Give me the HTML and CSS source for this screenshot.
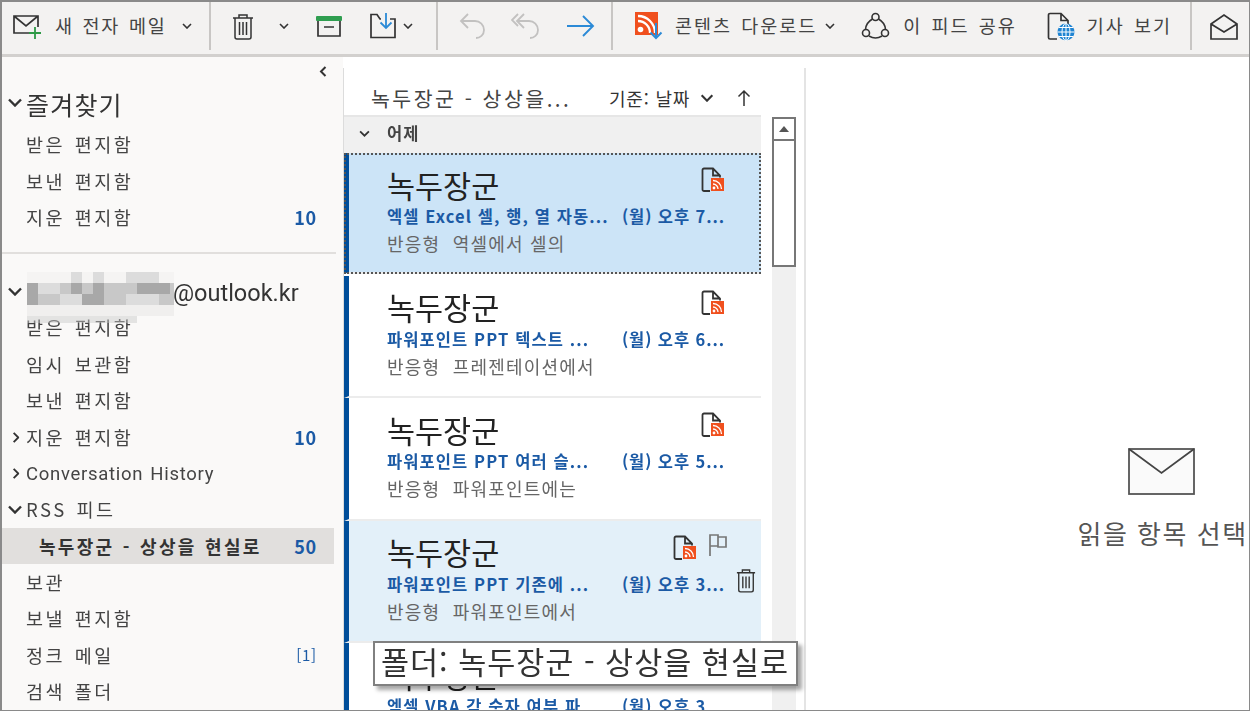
FILE: index.html
```html
<!DOCTYPE html>
<html lang="ko">
<head>
<meta charset="utf-8">
<title>Outlook</title>
<link rel="stylesheet" href="styles.css">
</head>
<body>
<svg class="defs" width="0" height="0" aria-hidden="true">
  <defs>
    <symbol id="chev" viewBox="0 0 10 6"><path d="M1 1l4 4 4-4" fill="none" stroke="currentColor" stroke-width="1.6"/></symbol>
    <symbol id="trash" viewBox="0 0 22 27"><path d="M1 5h20M7 5V2h8v3M3 5v19a2 2 0 0 0 2 2h12a2 2 0 0 0 2-2V5M7.500 9v13M11 9v13M14.500 9v13" fill="none" stroke="#333" stroke-width="1.500"/></symbol>
    <symbol id="rssdoc" viewBox="0 0 24 26"><path d="M9 24H3a1.500 1.500 0 0 1-1.500-1.500V3A1.500 1.500 0 0 1 3 1.500h9l7 7v2M12 1.500v7h7" fill="none" stroke="#333" stroke-width="1.800"/><rect x="10" y="11" width="13" height="13" fill="#f0501e"/><circle cx="13" cy="21" r="1.400" fill="#fff"/><path d="M12 17a5 5 0 0 1 5 5M12 13.500a8.500 8.500 0 0 1 8.500 8.500" fill="none" stroke="#fff" stroke-width="1.300"/></symbol>
  </defs>
</svg>
<div class="app">
  <header class="toolbar">
    <div class="group g1">
      <svg class="ico" width="30" height="28" viewBox="0 0 30 28"><path d="M18 21H2V4h24v11M2 4l12 10L26 4" fill="none" stroke="#333" stroke-width="1.700"/><path d="M23 15v12M17 21h12" stroke="#2d9a46" stroke-width="1.800"/></svg>
      <span class="label l-new">새 전자 메일</span>
      <svg class="chev c-new"><use href="#chev"/></svg>
    </div>
    <div class="group g2">
      <svg class="ico" width="22" height="27"><use href="#trash"/></svg>
      <svg class="chev c-trash"><use href="#chev"/></svg>
      <svg class="ico i-arch" width="28" height="24" viewBox="0 0 28 24"><path d="M3 7v15h22V7M9 13h10" fill="none" stroke="#333" stroke-width="1.700"/><rect x="1" y="2" width="26" height="5" rx="1" fill="#2f9e50"/></svg>
      <svg class="ico i-move" width="29" height="28" viewBox="0 0 29 28"><path d="M12 7H11L8 2.500H2v23h24V7h-5" fill="none" stroke="#333" stroke-width="1.700"/><path d="M17 1v15M11.500 10.500L17 16l5.500-5.500" fill="none" stroke="#2b8ad6" stroke-width="1.800"/></svg>
      <svg class="chev c-move"><use href="#chev"/></svg>
    </div>
    <div class="group g3">
      <svg class="ico" width="28" height="28" viewBox="0 0 28 28"><path d="M9 2L2 9l7 7M2 9h14a9 9 0 0 1 9 9c0 5-4 8-8 8" fill="none" stroke="#c2c1c0" stroke-width="1.800"/></svg>
      <svg class="ico i-all" width="30" height="28" viewBox="0 0 30 28"><path d="M7 2L1 8l6 6M13 2L6 9l7 7M6 9h12a9 9 0 0 1 9 9c0 5-4 8-8 8" fill="none" stroke="#c2c1c0" stroke-width="1.800"/></svg>
      <svg class="ico i-fwd" width="29" height="26" viewBox="0 0 29 26"><path d="M1 13h26M17 3l10 10-10 10" fill="none" stroke="#2b8ad6" stroke-width="1.900"/></svg>
    </div>
    <div class="group g4">
      <svg class="ico" width="29" height="30" viewBox="0 0 29 30"><rect x="0" y="1" width="23" height="23" fill="#f0501e"/><circle cx="5.500" cy="18.500" r="2.800" fill="#fff"/><path d="M3 10a12 12 0 0 1 12 12M3 5a17 17 0 0 1 17 17" fill="none" stroke="#fff" stroke-width="2.300"/><path d="M21 12v15M15.500 21.500L21 27l5.500-5.500" fill="none" stroke="#2b8ad6" stroke-width="2"/></svg>
      <span class="label l-dl">콘텐츠 다운로드</span>
      <svg class="chev c-dl"><use href="#chev"/></svg>
      <svg class="ico i-share" width="29" height="28" viewBox="0 0 29 28"><g fill="none" stroke="#333" stroke-width="1.600"><circle cx="14.500" cy="5" r="3.500"/><circle cx="5" cy="21" r="3.500"/><circle cx="24" cy="21" r="3.500"/><path d="M11.500 7C7 9.500 4.800 13 4.500 17.500M17.500 7C22 9.500 24.200 13 24.500 17.500M8 24c4 2.500 9 2.500 13 0"/></g></svg>
      <span class="label l-share">이 피드 공유</span>
      <svg class="ico i-view" width="28" height="29" viewBox="0 0 28 29"><path d="M10 27H3a1.500 1.500 0 0 1-1.500-1.500V3A1.500 1.500 0 0 1 3 1.500h11l7 7v5M14 1.500v7h7" fill="none" stroke="#333" stroke-width="1.700"/><circle cx="19" cy="20" r="8.500" fill="#1f84d2"/><path d="M10.500 20h17M12 15.500h14M12 24.500h14M19 11.500v17" stroke="#fff" stroke-width="1"/><ellipse cx="19" cy="20" rx="4" ry="8.500" fill="none" stroke="#fff" stroke-width="1"/></svg>
      <span class="label l-view">기사 보기</span>
    </div>
    <div class="group g5">
      <svg class="ico" width="28" height="27" viewBox="0 0 28 27"><path d="M1 11L14 2l13 9v15H1zM1 11l13 8 13-8" fill="none" stroke="#333" stroke-width="1.700"/></svg>
    </div>
  </header>
  <main class="body">
    <nav class="sidebar">
      <div class="collapse"><svg width="8" height="11" viewBox="0 0 8 11"><path d="M6.500 1L2 5.500 6.500 10" fill="none" stroke="#333" stroke-width="2"/></svg></div>
      <div class="row head"><svg class="tw"><use href="#chev"/></svg><span>즐겨찾기</span></div>
      <div class="row"><span class="name">받은 편지함</span></div>
      <div class="row"><span class="name">보낸 편지함</span></div>
      <div class="row"><span class="name">지운 편지함</span><b class="count">10</b></div>
      <hr class="divider">
      <div class="row acct"><svg class="tw"><use href="#chev"/></svg><span class="addr">@outlook.kr</span></div>
      <div class="row"><span class="name">받은 편지함</span></div>
      <div class="row"><span class="name">임시 보관함</span></div>
      <div class="row"><span class="name">보낸 편지함</span></div>
      <div class="row"><svg class="tw side"><use href="#chev"/></svg><span class="name">지운 편지함</span><b class="count">10</b></div>
      <div class="row"><svg class="tw side"><use href="#chev"/></svg><span class="name latin">Conversation History</span></div>
      <div class="row"><svg class="tw"><use href="#chev"/></svg><span class="name">RSS 피드</span></div>
      <div class="row current"><b class="name sub">녹두장군 - 상상을 현실로</b><b class="count">50</b></div>
      <div class="row"><span class="name">보관</span></div>
      <div class="row"><span class="name">보낼 편지함</span></div>
      <div class="row"><span class="name">정크 메일</span><span class="count thin">[1]</span></div>
      <div class="row"><span class="name">검색 폴더</span></div>
      <svg class="mosaic" width="147" height="51" viewBox="0 0 147 51">
        <g fill="#f0efee"><rect x="0" y="0" width="147" height="11" opacity=".5"/><rect x="0" y="33" width="147" height="11"/></g>
        <g fill="#c8c8c8"><rect x="0" y="11" width="147" height="22"/><rect x="0" y="44" width="110" height="7" opacity=".45"/></g>
        <g fill="#a8a8a8"><rect x="0" y="11" width="11" height="11"/><rect x="0" y="22" width="11" height="11"/><rect x="44" y="11" width="11" height="11"/><rect x="66" y="11" width="11" height="11"/><rect x="110" y="11" width="33" height="11"/><rect x="55" y="22" width="22" height="11"/></g>
        <g fill="#dcdcdc"><rect x="11" y="11" width="22" height="11"/><rect x="33" y="22" width="22" height="11"/><rect x="99" y="22" width="33" height="11"/><rect x="44" y="0" width="11" height="11"/><rect x="66" y="0" width="11" height="11"/><rect x="99" y="0" width="33" height="11"/></g>
      </svg>
    </nav>
    <section class="list">
      <div class="listhead"><span class="lt">녹두장군 - 상상을...</span><span class="sort">기준: 날짜</span><svg class="chev c-sort"><use href="#chev"/></svg><svg class="up" width="14" height="18" viewBox="0 0 14 18"><path d="M7 17V2M1.500 7.500L7 2l5.500 5.500" fill="none" stroke="#333" stroke-width="1.500"/></svg></div>
      <div class="listbody">
        <div class="msgs">
          <div class="grouphead"><svg class="chev c-group"><use href="#chev"/></svg><b>어제</b></div>
          <article class="msg selected">
            <div class="from"><span>녹두장군</span><svg class="mi" width="24" height="26"><use href="#rssdoc"/></svg></div>
            <div class="subj"><span>엑셀 Excel 셀, 행, 열 자동...</span><span class="time">(월) 오후 7...</span></div>
            <div class="prev">반응형&nbsp; 역셀에서 셀의</div>
          </article>
          <article class="msg">
            <div class="from"><span>녹두장군</span><svg class="mi" width="24" height="26"><use href="#rssdoc"/></svg></div>
            <div class="subj"><span>파워포인트 PPT 텍스트 ...</span><span class="time">(월) 오후 6...</span></div>
            <div class="prev">반응형&nbsp; 프레젠테이션에서</div>
          </article>
          <article class="msg">
            <div class="from"><span>녹두장군</span><svg class="mi" width="24" height="26"><use href="#rssdoc"/></svg></div>
            <div class="subj"><span>파워포인트 PPT 여러 슬...</span><span class="time">(월) 오후 5...</span></div>
            <div class="prev">반응형&nbsp; 파워포인트에는</div>
          </article>
          <article class="msg hover">
            <div class="from"><span>녹두장군</span><svg class="mi m2" width="24" height="26"><use href="#rssdoc"/></svg><svg class="flag" width="20" height="24" viewBox="0 0 20 24"><path d="M2 23V2h8v2h8v10h-8V3M2 13h8" fill="none" stroke="#777" stroke-width="1.700"/></svg></div>
            <div class="subj"><span>파워포인트 PPT 기존에 ...</span><span class="time">(월) 오후 3...</span></div>
            <div class="prev">반응형&nbsp; 파워포인트에서</div>
            <svg class="del" width="20" height="25"><use href="#trash"/></svg>
          </article>
          <article class="msg">
            <div class="from"><span>녹두장군</span></div>
            <div class="subj"><span>엑셀 VBA 각 숫자 여부 파...</span><span class="time">(월) 오후 3...</span></div>
          </article>
        </div>
        <div class="scroll"><div class="sbtn"><i></i></div><div class="thumb"></div></div>
      </div>
      <div class="tip">폴더: 녹두장군 - 상상을 현실로</div>
    </section>
    <section class="reading">
      <svg width="67" height="47" viewBox="0 0 67 47"><rect x="1" y="1" width="65" height="45" fill="#fafafa" stroke="#555" stroke-width="1.800"/><path d="M1 1l32.500 24L66 1" fill="none" stroke="#444" stroke-width="1.800"/></svg>
      <p>읽을 항목 선택</p>
    </section>
  </main>
</div>
</body>
</html>
```

FILE: styles.css
```css
* { box-sizing: border-box; }
html, body { margin: 0; height: 100%; overflow: hidden; }
body { font-family: "Noto Sans CJK KR", "Noto Sans", sans-serif; color: #333; background: #fff; }
.defs { position: absolute; }
.app { width: 1250px; height: 711px; display: flex; flex-direction: column; border: 1px solid #8a8a8a; border-width: 2px 1px 1px 2px; overflow: hidden; filter: blur(.35px); }

.toolbar { height: 55px; flex: none; display: flex; background: #f3f2f1; border-bottom: 3px solid #d2d0ce; }
.group { display: flex; align-items: center; height: 48px; border-right: 2px solid #c8c6c4; flex: none; }
.g1 { width: 209px; padding-left: 10px; }
.g2 { width: 227px; padding-left: 21px; }
.g3 { width: 175px; padding-left: 21px; }
.g4 { width: 579px; padding-left: 22px; }
.g5 { flex: 1; padding-left: 18px; border-right: 0; }
.ico { flex: none; display: block; }
.label { font-size: 18.500px; letter-spacing: 2px; word-spacing: 2px; color: #444; white-space: nowrap; line-height: 1; padding-bottom: 2px; }
.chev { width: 10px; height: 6px; flex: none; color: #333; }
.l-new { margin-left: 13px; letter-spacing: 1.700px; }
.c-new { margin-left: 16px; }
.c-trash { margin-left: 25px; }
.i-arch { margin-left: 26px; }
.i-move { margin-left: 26px; }
.c-move { margin-left: 5px; }
.i-all { margin-left: 24px; }
.i-fwd { margin-left: 25px; }
.l-dl { margin-left: 11px; }
.c-dl { margin-left: 8px; }
.i-share { margin-left: 26px; }
.l-share { margin-left: 13px; }
.i-view { margin-left: 30px; }
.l-view { margin-left: 12px; }

.body { flex: 1; min-height: 0; display: flex; }
.sidebar { width: 341px; flex: none; background: #faf9f8; position: relative; padding-top: 9px; overflow: hidden; }
.collapse { height: 12px; display: flex; justify-content: flex-end; padding-right: 16px; }
.row { height: 36.400px; display: flex; align-items: center; padding-left: 24px; padding-right: 26px; position: relative; font-size: 18.500px; letter-spacing: 2.500px; word-spacing: 2px; color: #444; white-space: nowrap; }
.row.head { height: 48px; padding-top: 4px; font-size: 25px; letter-spacing: 1.200px; color: #333; }
.row.acct { height: 37px; margin-top: 18px; padding-top: 4px; font-family: Roboto, "Noto Sans", sans-serif; font-size: 23.500px; letter-spacing: 0; color: #333; padding-left: 171px; }
.tw { position: absolute; left: 5px; top: 50%; margin-top: -4px; width: 16px; height: 9px; color: #333; }
.tw.side { transform: rotate(-90deg); left: 8px; width: 12px; height: 7px; margin-top: -3px; }
.latin { font-family: Roboto, "Noto Sans", sans-serif; letter-spacing: .7px; padding-top: 2px; }
.row .count { margin-left: auto; color: #1b5aa5; font-weight: 700; letter-spacing: .8px; font-size: 18px; }
.row .count.thin { font-weight: 400; font-size: 15px; }
.current { background: #e1dfdd; margin-right: 9px; padding-right: 17px; }
.sub { font-weight: 700; font-size: 18px; letter-spacing: 2.300px; word-spacing: 1px; padding-left: 13px; color: #333; }
.divider { border: 0; height: 2px; background: #e1dfdd; margin: 17px 7px 0 0; }
.mosaic { position: absolute; left: 25px; top: 215px; }

.list { width: 463px; flex: none; display: flex; flex-direction: column; position: relative; border-left: 1px solid #dcdcdc; border-right: 2px solid #e4e4e4; margin-top: 11px; }
.listhead { height: 47px; flex: none; display: flex; align-items: center; padding-left: 27px; padding-top: 13px; font-size: 20.500px; letter-spacing: 2.500px; white-space: nowrap; background: #fff; }
.lt { width: 238px; color: #444; }
.sort { font-size: 18px; letter-spacing: .8px; }
.c-sort { width: 14px; height: 8px; margin-left: 10px; }
.up { margin-left: 23px; }
.listbody { flex: 1; min-height: 0; display: flex; overflow: hidden; }
.msgs { width: 417px; flex: none; overflow: hidden; }
.grouphead { height: 38px; background: #f0f0f0; border-top: 2px solid #e6e6e6; display: flex; align-items: center; padding: 0 0 4px 15px; font-size: 16.500px; letter-spacing: 1px; color: #444; }
.c-group { width: 11px; height: 7px; margin-right: 17px; }
.msg { height: 122.500px; padding: 9px 36px 0 38px; border-left: 5px solid #004e9a; border-bottom: 2px solid #ececec; position: relative; }
.selected { height: 121px; margin-bottom: 1.500px; background: #cce4f7; outline: 2px dotted #555; outline-offset: -2px; }
.hover { background: #e3f0f9; }
.from { display: flex; align-items: center; justify-content: space-between; height: 42px; padding-top: 4px; font-size: 30.500px; color: #222; line-height: 1; position: relative; }
.mi { position: absolute; right: 0; top: 5px; }
.m2 { right: 28px; }
.flag { position: absolute; right: -3px; top: 3px; }
.subj { display: flex; justify-content: space-between; height: 24px; align-items: center; font-size: 16.500px; font-weight: 700; color: #1b5aa5; letter-spacing: 1.100px; white-space: nowrap; }
.time { flex: none; letter-spacing: .9px; }
.prev { font-size: 18px; color: #666; letter-spacing: 1.200px; margin-top: 2px; white-space: nowrap; }
.del { position: absolute; right: 5px; top: 47px; }
.scroll { width: 24px; margin-left: 11px; flex: none; background: #f0f0f0; margin-top: 2px; }
.sbtn { height: 24px; background: #fff; border: 2px solid #777; display: flex; align-items: center; justify-content: center; }
.sbtn i { width: 0; height: 0; border: 5px solid transparent; border-top: 0; border-bottom: 6px solid #555; }
.thumb { height: 126px; background: #fff; border: 2px solid #777; border-top: 0; }
.tip { position: absolute; left: 29px; top: 573px; width: 425px; height: 45px; background: #fff; border: 2px solid #808080; box-shadow: 4px 4px 4px rgba(0,0,0,.35); font-size: 30.500px; line-height: 36px; padding-left: 6px; white-space: nowrap; color: #333; letter-spacing: 1px; }

.reading { flex: 1; display: flex; flex-direction: column; align-items: center; padding-top: 391px; padding-left: 268px; overflow: hidden; background: #fff; }
.reading svg { flex: none; }
.reading p { margin: 18px 0 0; font-size: 26px; color: #555; white-space: nowrap; letter-spacing: 1.500px; line-height: 40px; width: 168px; }
```
